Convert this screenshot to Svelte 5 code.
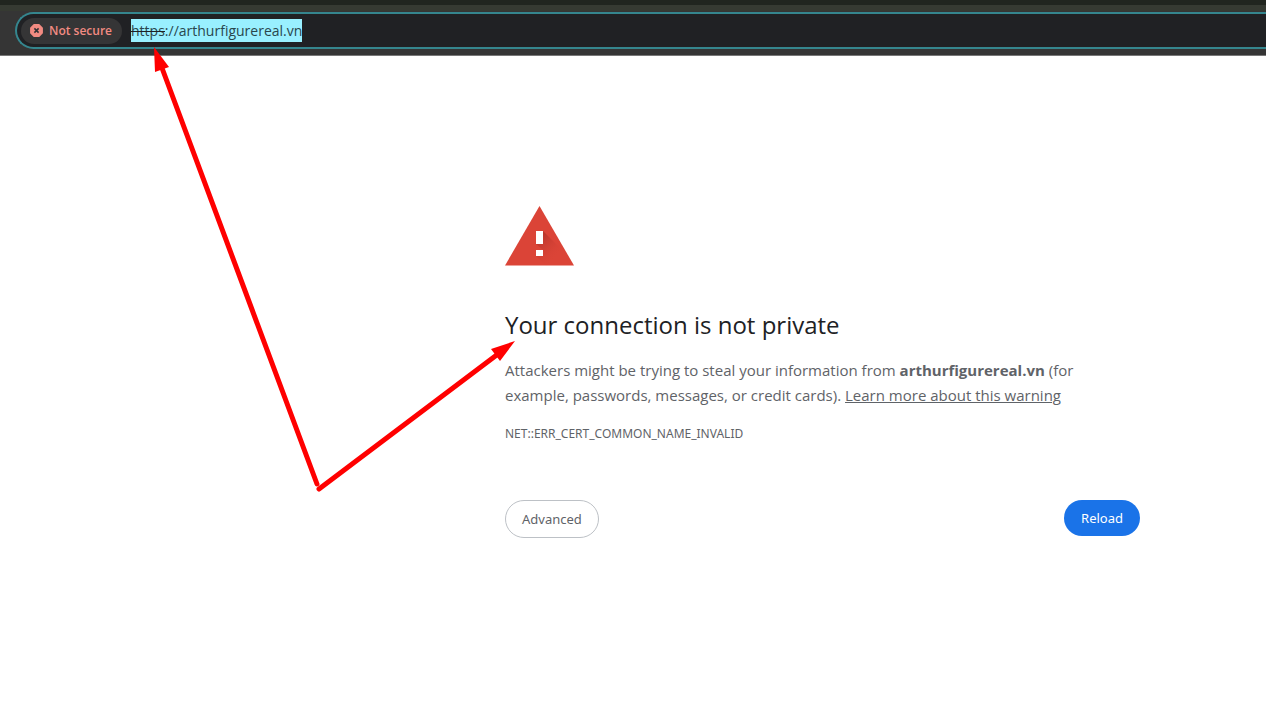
<script lang="ts">
    let url = $state("https://arthurfigurereal.vn");
    let host = $derived(url.replace("https://", ""));
    let errorCode = "NET::ERR_CERT_COMMON_NAME_INVALID";
</script>

<div class="page">
    <header>
        <div class="tab-strip"></div>
        <div class="toolbar">
            <div class="omnibox">
                <button class="security-chip">
                    <svg width="13" height="13" viewBox="0 0 13 13" aria-hidden="true">
                        <path d="M4 0.8h5L12.2 4v5L9 12.2H4L0.8 9V4z" fill="#f28b82" stroke="#f28b82" stroke-width="1.4" stroke-linejoin="round" />
                        <path d="M4.4 4.4l4.2 4.2M8.6 4.4l-4.2 4.2" stroke="#303134" stroke-width="1.5" />
                    </svg>
                    Not secure
                </button>
                <div class="address">
                    <input type="text" aria-label="Address bar" size="27" spellcheck="false" bind:value={url} />
                    <span class="strike"></span>
                </div>
            </div>
        </div>
    </header>

    <main>
        <svg class="warning-icon" width="70" height="60" viewBox="0 0 70 60" aria-hidden="true">
            <defs>
                <linearGradient id="shade" x1="35" y1="30" x2="54" y2="49" gradientUnits="userSpaceOnUse">
                    <stop offset="0" stop-color="#a52d25" stop-opacity="0.65" />
                    <stop offset="1" stop-color="#db4437" stop-opacity="0" />
                </linearGradient>
            </defs>
            <path d="M34.5 0L69 59.5H0z" fill="#db4437" />
            <path d="M38 25L56 43L62 59.5H41L31 50H38V44L31 38H38z" fill="url(#shade)" />
            <path d="M31 25h7v13h-7zM31 44h7v6h-7z" fill="#fff" />
        </svg>

        <h1>Your connection is not private</h1>
        <p>
            Attackers might be trying to steal your information from <strong>{host}</strong> (for
            example, passwords, messages, or credit cards).
            <a href="#learn-more">Learn more about this warning</a>
        </p>
        <div class="error-code">{errorCode}</div>

        <div class="buttons">
            <button class="advanced-btn">Advanced</button>
            <button class="reload-btn">Reload</button>
        </div>
    </main>

    <!-- arrows from one point to the address and to the heading -->
    <svg class="arrows" width="520" height="500" viewBox="0 0 520 500" aria-hidden="true">
        <g stroke="#f00" stroke-width="5" stroke-linecap="round">
            <path d="M317 484L162 68" />
            <path d="M319 489L498 354" />
        </g>
        <path d="M154 47L169 67L155 72zM515 341L500 361L491 349z" fill="#f00" />
    </svg>
</div>

<style>
    :global(body) {
        margin: 0;
        background: #fff;
    }

    .page {
        position: relative;
        font-family: "Open Sans", "Noto Sans", sans-serif;
        color: #5f6368;
    }

    .tab-strip {
        height: 6px;
        background: #363a32;
        border-top: 5px solid #21251f;
    }

    .toolbar {
        padding: 1px 0 6px 15px;
        background: #353535;
        border-bottom: 1px solid #777;
    }

    .omnibox {
        display: flex;
        align-items: center;
        gap: 9px;
        box-sizing: border-box;
        height: 37px;
        padding: 0 4px;
        background: #202124;
        border: 2px solid #35868e;
        border-right: none;
        border-radius: 19px 0 0 19px;
    }

    .security-chip {
        display: flex;
        align-items: center;
        gap: 6px;
        height: 26px;
        padding: 0 10px 0 9px;
        border: none;
        border-radius: 13px;
        background: #353536;
        color: #f28b82;
        font: 600 12px "Open Sans", sans-serif;
    }

    .address {
        position: relative;
        display: flex;
    }

    .address input {
        field-sizing: content;
        height: 23px;
        padding: 0;
        border: none;
        outline: none;
        background: #99f0ff;
        color: #29474d;
        font: 14px "Open Sans", sans-serif;
    }

    .strike {
        position: absolute;
        top: 12px;
        left: 0;
        width: 34px;
        height: 1px;
        background: #202124;
    }

    main {
        max-width: 635px;
        padding: 150px 24px 0 505px;
    }

    .warning-icon {
        display: block;
    }

    h1 {
        margin: 41px 0 15px;
        color: #202124;
        font-size: 24px;
        font-weight: 400;
        line-height: 36px;
    }

    p {
        margin: 0;
        font-size: 15px;
        line-height: 25px;
    }

    strong {
        font-weight: 700;
    }

    a {
        color: inherit;
    }

    .error-code {
        margin-top: 15px;
        font-family: "Noto Sans", sans-serif;
        font-size: 12px;
        line-height: 22px;
    }

    .buttons {
        display: flex;
        justify-content: space-between;
        align-items: flex-start;
        margin-top: 55px;
    }

    .buttons button {
        height: 36px;
        padding: 0 17px;
        border: none;
        border-radius: 19px;
        font: 13px "Noto Sans", sans-serif;
    }

    .buttons .advanced-btn {
        height: 38px;
        padding: 0 16px;
        border: 1px solid #bdc1c6;
        background: #fff;
        color: #5f6368;
    }

    .buttons .reload-btn {
        background: #1a73e8;
        color: #fff;
    }

    .arrows {
        position: absolute;
        top: 0;
        left: 0;
        pointer-events: none;
    }
</style>
